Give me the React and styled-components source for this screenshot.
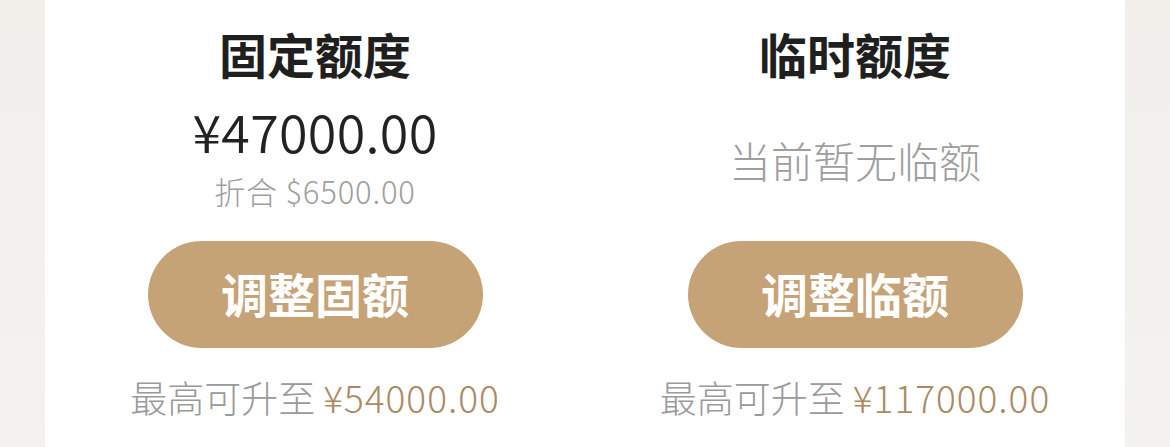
import React from 'react';
import styled, { createGlobalStyle } from 'styled-components';

const GlobalStyle = createGlobalStyle`
  html, body {
    margin: 0;
    padding: 0;
  }
  body {
    background: linear-gradient(180deg, #f2efeb 0%, #f3f2f0 100%);
    font-family: "Noto Sans CJK SC", "Noto Sans", sans-serif;
  }
`;

const Card = styled.div`
  margin: 0 45px;
  height: 447px;
  background: #fff;
  display: grid;
  grid-template-columns: 1fr 1fr;
  overflow: hidden;
`;

const Column = styled.div`
  display: flex;
  flex-direction: column;
  align-items: center;
`;

const Title = styled.div`
  margin-top: 23px;
  height: 60px;
  line-height: 60px;
  font-size: 48px;
  font-weight: 700;
  color: #1f1f1f;
`;

const Info = styled.div`
  height: 158px;
  display: flex;
  flex-direction: column;
  align-items: center;
  justify-content: ${p => (p.$top ? 'flex-start' : 'center')};
  padding-top: ${p => (p.$top ? '18px' : '0')};
  box-sizing: border-box;
`;

const Amount = styled.div`
  height: 60px;
  line-height: 60px;
  font-size: 52px;
  font-weight: 350;
  letter-spacing: 0.3px;
  color: #222;
`;

const Sub = styled.div`
  margin-top: 8px;
  height: 44px;
  line-height: 44px;
  font-size: 31px;
  font-weight: 300;
  letter-spacing: 0.8px;
  color: #9e9e9e;
`;

const Empty = styled.div`
  margin-top: -4px;
  font-size: 42px;
  line-height: 60px;
  font-weight: 300;
  color: #9e9e9e;
`;

const Button = styled.button`
  width: 335px;
  height: 107px;
  border: none;
  border-radius: 54px;
  background: #c6a277;
  color: #fff;
  font-family: inherit;
  font-size: 47px;
  font-weight: 700;
  line-height: 1;
  padding: 0 0 4px;
  cursor: pointer;
`;

const Limit = styled.div`
  margin-top: 24px;
  line-height: 50px;
  font-size: 37px;
  font-weight: 300;
  color: #9a9a9a;
`;

const LimitValue = styled.span`
  margin-left: 8px;
  letter-spacing: 1px;
  color: #ab8a62;
`;

export default function App() {
  return (
    <>
      <GlobalStyle />
      <Card>
        <Column>
          <Title>固定额度</Title>
          <Info $top>
            <Amount>¥47000.00</Amount>
            <Sub>折合 $6500.00</Sub>
          </Info>
          <Button>调整固额</Button>
          <Limit>
            最高可升至<LimitValue>¥54000.00</LimitValue>
          </Limit>
        </Column>
        <Column>
          <Title>临时额度</Title>
          <Info>
            <Empty>当前暂无临额</Empty>
          </Info>
          <Button>调整临额</Button>
          <Limit>
            最高可升至<LimitValue>¥117000.00</LimitValue>
          </Limit>
        </Column>
      </Card>
    </>
  );
}
